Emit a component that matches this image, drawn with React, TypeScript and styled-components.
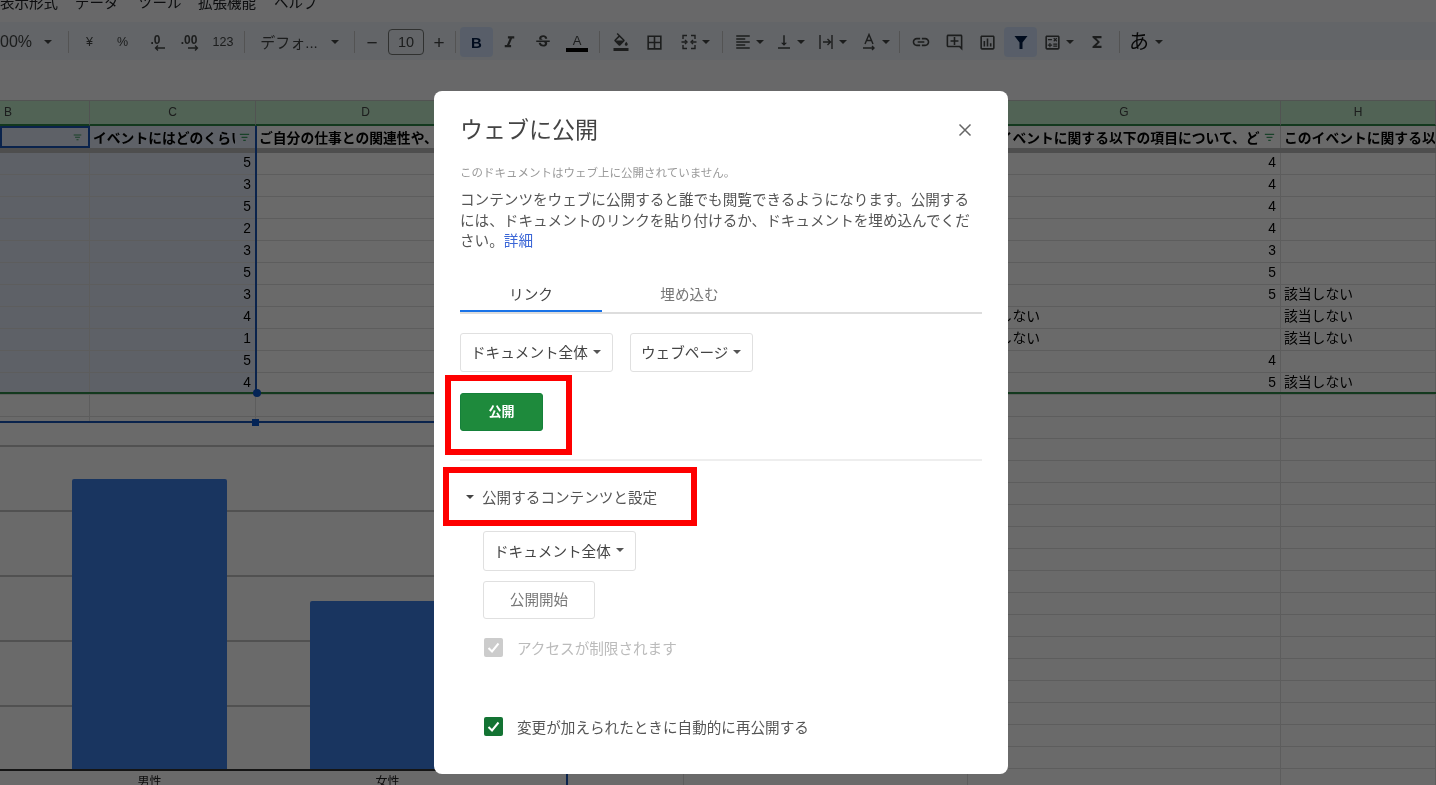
import { FC, ReactNode } from 'react';
import styled, { createGlobalStyle } from 'styled-components';
import {
  MdBorderAll,
  MdFormatAlignLeft,
  MdFormatColorFill,
  MdFormatItalic,
  MdFunctions,
  MdLink,
  MdOutlineAddComment,
  MdOutlineCalculate,
  MdOutlineInsertChart,
  MdStrikethroughS,
  MdVerticalAlignBottom,
} from 'react-icons/md';

const FONT = `"Liberation Sans", "Noto Sans CJK JP", sans-serif`;
const COLUMNS = '90px 166px 220px 208px 284px 313px 155px';
const NA = '該当しない';

type RowData = { c: string; g?: string; gText?: string; h?: string };

const rows: RowData[] = [
  { c: '5', g: '4' },
  { c: '3', g: '4' },
  { c: '5', g: '4' },
  { c: '2', g: '4' },
  { c: '3', g: '3' },
  { c: '5', g: '5' },
  { c: '3', g: '5', h: NA },
  { c: '4', gText: NA, h: NA },
  { c: '1', gText: NA, h: NA },
  { c: '5', g: '4' },
  { c: '4', g: '5', h: NA },
];
const emptyRows = Array.from({ length: 18 });

const GlobalStyle = createGlobalStyle`
  html, body {
    margin: 0;
    padding: 0;
    background: #fff;
    font-family: ${FONT};
  }
`;

const Page = styled.div`
  position: relative;
  width: 1436px;
  height: 785px;
  overflow: hidden;
  background: #fff;
  filter: blur(0.45px);
`;

const MenuBar = styled.div`
  display: flex;
  height: 22px;
  overflow: hidden;
  background: #f9fbfd;
`;

const MenuItem = styled.span<{ $width: number }>`
  width: ${(p) => p.$width}px;
  margin-top: -7px;
  line-height: 20px;
  font-size: 14.5px;
  color: #202124;
`;

const Toolbar = styled.div`
  display: flex;
  align-items: center;
  height: 38px;
  box-sizing: border-box;
  padding-top: 2px;
  background: #edf2fa;
  color: #444746;
  overflow: hidden;
`;

const ToolButton = styled.div<{ $width?: number; $active?: boolean; $start?: boolean }>`
  display: flex;
  flex: none;
  align-items: center;
  justify-content: ${(p) => (p.$start ? 'flex-start' : 'center')};
  gap: 4px;
  width: ${(p) => p.$width ?? 33}px;
  height: 30px;
  border-radius: 4px;
  background: ${(p) => (p.$active ? '#d3e3fd' : 'transparent')};
  font-size: 13px;
  color: ${(p) => (p.$active ? '#041e49' : '#444746')};
  svg {
    flex: none;
  }
`;

const ToolText = styled.span<{ $size?: number; $weight?: number; $color?: string }>`
  font-size: ${(p) => p.$size ?? 12.5}px;
  font-weight: ${(p) => p.$weight ?? 400};
  color: ${(p) => p.$color ?? 'inherit'};
  line-height: 1;
`;

const Separator = styled.div`
  flex: none;
  width: 1px;
  height: 22px;
  margin: 0 4px;
  background: #c7c7c7;
`;

const Caret = styled.i<{ $color?: string; $gap?: number }>`
  flex: none;
  width: 0;
  height: 0;
  margin-left: ${(p) => p.$gap ?? 0}px;
  border-left: 4px solid transparent;
  border-right: 4px solid transparent;
  border-top: 4px solid ${(p) => p.$color ?? '#444746'};
`;

const SizeBox = styled.div`
  flex: none;
  width: 36px;
  height: 26px;
  margin: 0 3px;
  border: 1px solid #747775;
  border-radius: 4px;
  box-sizing: border-box;
  line-height: 24px;
  text-align: center;
  font-size: 14.5px;
  color: #444746;
`;

const DecimalButton = styled.div`
  display: flex;
  flex-direction: column;
  align-items: center;
  font-size: 12px;
  font-weight: 700;
  line-height: 12px;
  svg {
    margin: -1px 0 0 8px;
  }
`;

const ColorLetter = styled.div`
  display: flex;
  flex-direction: column;
  align-items: center;
  width: 22px;
  font-size: 13px;
  line-height: 15px;
`;

const ColorBar = styled.div`
  width: 100%;
  height: 4px;
  background: #000;
`;

const FormulaArea = styled.div`
  height: 40px;
  background: #f9fbfd;
`;

const GridRow = styled.div<{ $height?: number }>`
  display: grid;
  grid-template-columns: ${COLUMNS};
  height: ${(p) => p.$height ?? 22}px;
  box-sizing: border-box;
`;

const ColumnLabel = styled.div<{ $left?: boolean }>`
  display: flex;
  align-items: center;
  justify-content: ${(p) => (p.$left ? 'flex-start' : 'center')};
  padding: 0 0 2px ${(p) => (p.$left ? 4 : 0)}px;
  height: 26px;
  box-sizing: border-box;
  background: #c2edcc;
  border-right: 1px solid #c4c7c5;
  border-top: 1px solid #c4c7c5;
  border-bottom: 2px solid #2f8a4a;
  font-size: 12px;
  color: #444746;
`;

const HeaderCell = styled.div<{ $selected?: boolean; $active?: boolean }>`
  position: relative;
  display: flex;
  align-items: center;
  height: 22px;
  box-sizing: border-box;
  padding-left: ${(p) => (p.$active ? 0 : 3)}px;
  overflow: hidden;
  white-space: nowrap;
  background: ${(p) => (p.$selected ? '#e3eaf7' : '#fff')};
  border-right: 1px solid #d5d5d5;
  border: ${(p) => (p.$active ? '2px solid #1a56b8' : '')};
  font-size: 13.8px;
  font-weight: 700;
  color: #000;
`;

const FilterBadge = styled.svg`
  position: absolute;
  top: 0;
  right: 0;
  height: 100%;
  padding: 0 5px 0 4px;
  background: inherit;
`;

const FreezeBar = styled.div`
  height: 5px;
  background: #bdbdbd;
`;

const Cell = styled.div<{ $selected?: boolean; $right?: boolean }>`
  padding: 0 4px 0 3px;
  overflow: hidden;
  white-space: nowrap;
  line-height: 20px;
  text-align: ${(p) => (p.$right ? 'right' : 'left')};
  background: ${(p) => (p.$selected ? '#e3eaf7' : '#fff')};
  border-right: 1px solid #e0e0e0;
  border-bottom: 1px solid #e0e0e0;
  font-size: 13.8px;
  color: #000;
`;

const SelectionEdge = styled.div`
  position: absolute;
  left: 255px;
  top: 126px;
  width: 2px;
  height: 267px;
  background: #1a56b8;
`;

const SelectionHandle = styled.div`
  position: absolute;
  left: 253px;
  top: 389px;
  width: 8px;
  height: 8px;
  border-radius: 50%;
  background: #0b57d0;
`;

const FilterEdge = styled.div`
  position: absolute;
  left: 0;
  top: 392px;
  width: 100%;
  height: 2px;
  background: #2f8a4a;
`;

const Chart = styled.div`
  position: absolute;
  left: 0;
  top: 421px;
  width: 568px;
  height: 364px;
  box-sizing: border-box;
  background: #fff;
  border-top: 2px solid #1a56b8;
  border-right: 2px solid #1a56b8;
`;

const ChartHandle = styled.div`
  position: absolute;
  left: 252px;
  top: -4px;
  width: 7px;
  height: 7px;
  background: #0b57d0;
`;

const Plot = styled.div`
  display: flex;
  align-items: flex-end;
  gap: 83px;
  height: 348px;
  box-sizing: border-box;
  padding-left: 72px;
  border-bottom: 2px solid #333;
  background: repeating-linear-gradient(
    to top,
    transparent 0 62px,
    #c4c4c4 62px 64px,
    transparent 64px 65px
  );
`;

const Bar = styled.div<{ $height: number }>`
  width: 155px;
  height: ${(p) => p.$height}px;
  border-radius: 2px 2px 0 0;
  background: #3e7fe8;
`;

const AxisLabels = styled.div`
  display: flex;
  gap: 83px;
  padding: 3px 0 0 72px;
`;

const AxisLabel = styled.span`
  width: 155px;
  text-align: center;
  font-size: 12px;
  line-height: 16px;
  color: #222;
`;

const Scrim = styled.div`
  position: absolute;
  inset: 0;
  display: flex;
  align-items: flex-start;
  background: rgba(0, 0, 0, 0.585);
`;

const Dialog = styled.div`
  position: relative;
  width: 574px;
  height: 683px;
  margin: 91px 0 0 434px;
  box-sizing: border-box;
  padding: 24px 26px 0;
  border-radius: 8px;
  background: #fff;
  color: #555;
  font-size: 14.6px;
`;

const TitleRow = styled.div`
  display: flex;
  align-items: center;
  justify-content: space-between;
  height: 30px;
  margin-bottom: 20px;
`;

const Title = styled.h2`
  margin: 0;
  font-size: 23px;
  font-weight: 400;
  line-height: 30px;
  color: #444;
`;

const CloseIcon = styled.svg`
  margin-right: 10px;
`;

const Notice = styled.p`
  margin: 0;
  font-size: 11.5px;
  line-height: 16px;
  color: #999;
`;

const Description = styled.p`
  margin: 9px 0 0;
  line-height: 20.5px;
  color: #555;
`;

const DetailLink = styled.a`
  color: #3b66d6;
  text-decoration: none;
`;

const Tabs = styled.div`
  display: flex;
  height: 32px;
  margin-top: 28px;
  border-bottom: 2px solid #ddd;
`;

const Tab = styled.div<{ $active?: boolean; $width: number }>`
  width: ${(p) => p.$width}px;
  height: 32px;
  box-sizing: border-box;
  line-height: 31px;
  text-align: center;
  color: ${(p) => (p.$active ? '#444' : '#777')};
  border-bottom: 2px solid ${(p) => (p.$active ? '#1a73e8' : 'transparent')};
`;

const SelectRow = styled.div`
  display: flex;
  gap: 17px;
  margin-top: 19px;
`;

const Select = styled.div<{ $width: number; $height?: number }>`
  display: flex;
  align-items: center;
  gap: 5px;
  width: ${(p) => p.$width}px;
  height: ${(p) => p.$height ?? 39}px;
  box-sizing: border-box;
  padding: 0 0 1px 10px;
  border: 1px solid #e0e0e0;
  border-radius: 3px;
  color: #444;
`;

const PublishButton = styled.div`
  width: 83px;
  height: 38px;
  margin-top: 21px;
  box-sizing: border-box;
  border: 1px solid #15813a;
  border-radius: 3px;
  background: #1e8a3c;
  line-height: 36px;
  text-align: center;
  font-size: 13px;
  font-weight: 700;
  color: #fff;
`;

const Divider = styled.div`
  height: 2px;
  margin-top: 28px;
  background: #eee;
`;

const Disclosure = styled.div`
  display: flex;
  align-items: center;
  gap: 8px;
  height: 22px;
  margin-top: 25px;
  padding-left: 6px;
  color: #555;
`;

const SettingsBlock = styled.div`
  display: flex;
  flex-direction: column;
  align-items: flex-start;
  margin: 23px 0 0 23px;
`;

const StartButton = styled.div`
  width: 112px;
  height: 38px;
  margin-top: 10px;
  box-sizing: border-box;
  border: 1px solid #e0e0e0;
  border-radius: 3px;
  line-height: 36px;
  text-align: center;
  color: #777;
`;

const CheckRow = styled.div<{ $top: number; $muted?: boolean }>`
  display: flex;
  align-items: center;
  gap: 14px;
  height: 20px;
  margin-top: ${(p) => p.$top}px;
  padding-left: 1px;
  color: ${(p) => (p.$muted ? '#bbb' : '#555')};
`;

const CheckBox = styled.span<{ $muted?: boolean }>`
  display: flex;
  align-items: center;
  justify-content: center;
  width: 19px;
  height: 19px;
  border-radius: 2px;
  background: ${(p) => (p.$muted ? '#ccc' : '#137333')};
`;

const Highlight = styled.div<{ $x: number; $y: number; $w: number; $h: number }>`
  position: absolute;
  left: ${(p) => p.$x}px;
  top: ${(p) => p.$y}px;
  width: ${(p) => p.$w}px;
  height: ${(p) => p.$h}px;
  box-sizing: border-box;
  border: 6px solid #fe0000;
`;

const Arrow: FC<{ left?: boolean }> = ({ left }) => (
  <svg width='11' height='6' viewBox='0 0 11 6'>
    <path
      d={left ? 'M11 3H2M4 .5 1.5 3 4 5.5' : 'M0 3h9M7 .5 9.5 3 7 5.5'}
      stroke='#444746'
      strokeWidth='1.3'
      fill='none'
    />
  </svg>
);

const FilterLines: FC<{ color?: string }> = ({ color = '#3c9d63' }) => (
  <FilterBadge width='11' height='22' viewBox='0 -8 13 26'>
    <path d='M1 2h11M3 5.500h7M5 9h3' stroke={color} strokeWidth='1.5' fill='none' />
  </FilterBadge>
);

const Icon: FC<{ children: ReactNode; color?: string }> = ({ children, color = '#444746' }) => (
  <svg width='18' height='18' viewBox='0 0 18 18' fill='none' stroke={color} strokeWidth='1.4'>
    {children}
  </svg>
);

const Tick = () => (
  <svg width='15' height='15' viewBox='0 0 15 15'>
    <path d='M2.500 8 6 11.500l6.500-8' stroke='#fff' strokeWidth='2' fill='none' />
  </svg>
);

const TopBars = () => (
  <>
    <MenuBar>
      <MenuItem $width={75}>表示形式</MenuItem>
      <MenuItem $width={63}>データ</MenuItem>
      <MenuItem $width={60}>ツール</MenuItem>
      <MenuItem $width={76}>拡張機能</MenuItem>
      <MenuItem $width={50}>ヘルプ</MenuItem>
    </MenuBar>
    <Toolbar>
      <ToolButton $width={64} $start>
        <ToolText $size={16}>00%</ToolText>
        <Caret $gap={8} />
      </ToolButton>
      <Separator />
      <ToolButton><ToolText>¥</ToolText></ToolButton>
      <ToolButton><ToolText>%</ToolText></ToolButton>
      <ToolButton>
        <DecimalButton>.0<Arrow left /></DecimalButton>
      </ToolButton>
      <ToolButton $width={34}>
        <DecimalButton>.00<Arrow /></DecimalButton>
      </ToolButton>
      <ToolButton $width={34}><ToolText>123</ToolText></ToolButton>
      <Separator />
      <ToolButton $width={101}>
        <ToolText $size={15}>デフォ...</ToolText>
        <Caret $gap={9} />
      </ToolButton>
      <Separator />
      <ToolButton $width={26}><ToolText $size={19}>−</ToolText></ToolButton>
      <SizeBox>10</SizeBox>
      <ToolButton $width={24}><ToolText $size={19}>+</ToolText></ToolButton>
      <Separator />
      <ToolButton $active><ToolText $size={15} $weight={700}>B</ToolText></ToolButton>
      <ToolButton><MdFormatItalic size={19} /></ToolButton>
      <ToolButton><MdStrikethroughS size={18} /></ToolButton>
      <ToolButton $width={36}>
        <ColorLetter>A<ColorBar /></ColorLetter>
      </ToolButton>
      <Separator />
      <ToolButton $width={34}><MdFormatColorFill size={18} /></ToolButton>
      <ToolButton><MdBorderAll size={19} /></ToolButton>
      <ToolButton $width={47}>
        <Icon>
          <path d='M3 6V2.500h4M11 2.500h4V6M3 12v3.500h4M11 15.500h4V12M6 9H1.500M12 9h4.500' />
          <path d='M5 7l2 2-2 2M13 7l-2 2 2 2' />
        </Icon>
        <Caret />
      </ToolButton>
      <Separator />
      <ToolButton $width={43}>
        <MdFormatAlignLeft size={18} />
        <Caret />
      </ToolButton>
      <ToolButton $width={40}>
        <MdVerticalAlignBottom size={18} />
        <Caret />
      </ToolButton>
      <ToolButton $width={44}>
        <Icon>
          <path d='M3 2v14M15 2v14M6 9h7M10.500 6l3 3-3 3' />
        </Icon>
        <Caret />
      </ToolButton>
      <ToolButton $width={41}>
        <Icon>
          <path d='M5 11 9 1.500 13 11M6.500 7.500h5M3 15h11M12 13l2 2-2 2' />
        </Icon>
        <Caret />
      </ToolButton>
      <Separator />
      <ToolButton><MdLink size={20} /></ToolButton>
      <ToolButton $width={34}><MdOutlineAddComment size={19} /></ToolButton>
      <ToolButton><MdOutlineInsertChart size={19} /></ToolButton>
      <ToolButton $active>
        <svg width='16' height='16' viewBox='0 0 16 16'>
          <path d='M1.500 2h13L9.500 8.500V15h-3V8.500z' fill='#041e49' />
        </svg>
      </ToolButton>
      <ToolButton $width={42}>
        <MdOutlineCalculate size={19} />
        <Caret />
      </ToolButton>
      <ToolButton $width={36}><MdFunctions size={18} /></ToolButton>
      <Separator />
      <ToolButton $width={44}>
        <ToolText $size={20} $color='#111'>あ</ToolText>
        <Caret $gap={2} />
      </ToolButton>
    </Toolbar>
    <FormulaArea />
  </>
);

const SheetGrid = () => (
  <>
    <GridRow $height={26}>
      <ColumnLabel $left>B</ColumnLabel>
      <ColumnLabel>C</ColumnLabel>
      <ColumnLabel>D</ColumnLabel>
      <ColumnLabel>E</ColumnLabel>
      <ColumnLabel>F</ColumnLabel>
      <ColumnLabel>G</ColumnLabel>
      <ColumnLabel>H</ColumnLabel>
    </GridRow>
    <GridRow>
      <HeaderCell $selected $active><FilterLines /></HeaderCell>
      <HeaderCell $selected>イベントにはどのくらい<FilterLines /></HeaderCell>
      <HeaderCell>ご自分の仕事との関連性や、</HeaderCell>
      <HeaderCell />
      <HeaderCell />
      <HeaderCell>このイベントに関する以下の項目について、どの<FilterLines /></HeaderCell>
      <HeaderCell>このイベントに関する以下の</HeaderCell>
    </GridRow>
    <FreezeBar />
    {rows.map((row, index) => (
      <GridRow key={index}>
        <Cell $selected />
        <Cell $selected $right>{row.c}</Cell>
        <Cell />
        <Cell />
        <Cell />
        <Cell $right={!row.gText}>{row.g ?? row.gText}</Cell>
        <Cell>{row.h}</Cell>
      </GridRow>
    ))}
    {emptyRows.map((_, index) => (
      <GridRow key={index}>
        <Cell />
        <Cell />
        <Cell />
        <Cell />
        <Cell />
        <Cell />
        <Cell />
      </GridRow>
    ))}
    <FilterEdge />
    <SelectionEdge />
    <SelectionHandle />
  </>
);

const ColumnChart = () => (
  <Chart>
    <ChartHandle />
    <Plot>
      <Bar $height={290} />
      <Bar $height={168} />
    </Plot>
    <AxisLabels>
      <AxisLabel>男性</AxisLabel>
      <AxisLabel>女性</AxisLabel>
    </AxisLabels>
  </Chart>
);

const PublishDialog = () => (
  <Dialog>
    <TitleRow>
      <Title>ウェブに公開</Title>
      <CloseIcon width='14' height='14' viewBox='0 0 14 14'>
        <path d='M1.500 1.500l11 11M12.500 1.500l-11 11' stroke='#666' strokeWidth='1.5' />
      </CloseIcon>
    </TitleRow>
    <Notice>このドキュメントはウェブ上に公開されていません。</Notice>
    <Description>
      コンテンツをウェブに公開すると誰でも閲覧できるようになります。公開するには、ドキュメントのリンクを貼り付けるか、ドキュメントを埋め込んでください。
      <DetailLink>詳細</DetailLink>
    </Description>
    <Tabs>
      <Tab $active $width={142}>リンク</Tab>
      <Tab $width={175}>埋め込む</Tab>
    </Tabs>
    <SelectRow>
      <Select $width={153}>ドキュメント全体<Caret $color='#555' /></Select>
      <Select $width={123}>ウェブページ<Caret $color='#555' /></Select>
    </SelectRow>
    <PublishButton>公開</PublishButton>
    <Divider />
    <Disclosure>
      <Caret $color='#444' />
      公開するコンテンツと設定
    </Disclosure>
    <SettingsBlock>
      <Select $width={153} $height={40}>ドキュメント全体<Caret $color='#555' /></Select>
      <StartButton>公開開始</StartButton>
      <CheckRow $top={19} $muted>
        <CheckBox $muted><Tick /></CheckBox>
        アクセスが制限されます
      </CheckRow>
      <CheckRow $top={59}>
        <CheckBox><Tick /></CheckBox>
        変更が加えられたときに自動的に再公開する
      </CheckRow>
    </SettingsBlock>
    <Highlight $x={11} $y={284} $w={127} $h={80} />
    <Highlight $x={9} $y={376} $w={254} $h={59} />
  </Dialog>
);

export default function App() {
  return (
    <Page>
      <GlobalStyle />
      <TopBars />
      <SheetGrid />
      <ColumnChart />
      <Scrim>
        <PublishDialog />
      </Scrim>
    </Page>
  );
}
